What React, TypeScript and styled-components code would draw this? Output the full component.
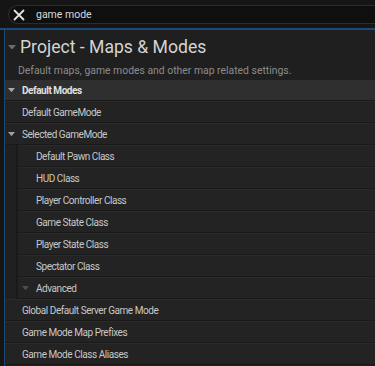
import React from 'react';
import styled, { createGlobalStyle } from 'styled-components';

const GlobalStyle = createGlobalStyle`
  html, body {
    margin: 0;
    padding: 0;
    background: #151515;
    font-family: Roboto, "Noto Sans", "Liberation Sans", sans-serif;
  }
`;

interface Row {
  label: string;
  level: number;
  expander?: boolean;
  dim?: boolean;
}

const rows: Row[] = [
  { label: 'Default GameMode', level: 1 },
  { label: 'Selected GameMode', level: 1, expander: true },
  { label: 'Default Pawn Class', level: 2 },
  { label: 'HUD Class', level: 2 },
  { label: 'Player Controller Class', level: 2 },
  { label: 'Game State Class', level: 2 },
  { label: 'Player State Class', level: 2 },
  { label: 'Spectator Class', level: 2 },
  { label: 'Advanced', level: 2, expander: true, dim: true },
  { label: 'Global Default Server Game Mode', level: 1 },
  { label: 'Game Mode Map Prefixes', level: 1 },
  { label: 'Game Mode Class Aliases', level: 1 },
];

function Arrow({ color, size }: { color: string; size: number }) {
  return (
    <svg width={size} height={size * 0.6} viewBox="0 0 10 6">
      <path d="M0 0 L10 0 L5 6 Z" fill={color} />
    </svg>
  );
}

function App() {
  return (
    <>
      <GlobalStyle />
      <Page>
        <SearchBar>
          <SearchBox>
            <svg width="12" height="12" viewBox="0 0 12 12">
              <path d="M1.5 1.5 L10.5 10.5 M10.5 1.5 L1.5 10.5" stroke="#e2e2e2" strokeWidth="1.8" strokeLinecap="round" />
            </svg>
            <SearchText>game mode</SearchText>
          </SearchBox>
        </SearchBar>
        <Panel>
          <TitleBlock>
            <TitleRow>
              <Arrow color="#6a6a6a" size={8} />
              <Title>Project - Maps &amp; Modes</Title>
            </TitleRow>
            <Subtitle>Default maps, game modes and other map related settings.</Subtitle>
          </TitleBlock>
          <CategoryRow>
            <Arrow color="#a8a8a8" size={7} />
            <CategoryLabel>Default Modes</CategoryLabel>
          </CategoryRow>
          {rows.map((row) => (
            <PropRow key={row.label}>
              {row.level === 2 && <Indent />}
              <PropCell $level={row.level}>
                {row.expander ? (
                  <Arrow color={row.dim ? '#4e4e4e' : '#a0a0a0'} size={7} />
                ) : (
                  <Spacer />
                )}
                <PropLabel>{row.label}</PropLabel>
              </PropCell>
            </PropRow>
          ))}
        </Panel>
      </Page>
    </>
  );
}

export default App;

const Page = styled.div`
  width: 375px;
  height: 366px;
  overflow: hidden;
  background: #151515;
  display: flex;
  flex-direction: column;
`;

const SearchBar = styled.div`
  height: 30px;
  flex-shrink: 0;
  padding: 5px 0 0 8px;
  box-sizing: border-box;
  border-bottom: 2px solid #1b4a78;
`;

const SearchBox = styled.div`
  height: 17px;
  border: 1px solid #2c2c2c;
  border-right: none;
  border-radius: 10px 0 0 10px;
  background: #0f0f0f;
  display: flex;
  align-items: center;
  padding-left: 4px;
  gap: 11px;
`;

const SearchText = styled.span`
  color: #d8d8d8;
  font-size: 10.5px;
`;

const Panel = styled.div`
  flex: 1;
  margin-left: 4px;
  border-left: 1px solid #1b4a78;
  background: #202020;
  display: flex;
  flex-direction: column;
`;

const TitleBlock = styled.div`
  height: 50px;
  flex-shrink: 0;
  padding: 6px 0 0 3px;
  box-sizing: border-box;
  background: #1f1f1f;
`;

const TitleRow = styled.div`
  display: flex;
  align-items: center;
  gap: 4px;
  height: 22px;
`;

const Title = styled.span`
  color: #d4d4d4;
  font-size: 17.6px;
`;

const Subtitle = styled.div`
  color: #8c8c8c;
  font-size: 10.4px;
  margin: 6px 0 0 10px;
`;

const CategoryRow = styled.div`
  height: 21px;
  flex-shrink: 0;
  box-sizing: border-box;
  background: #2f2f2f;
  display: flex;
  align-items: center;
  padding-left: 3px;
  gap: 7px;
  border-bottom: 1px solid #1a1a1a;
`;

const CategoryLabel = styled.span`
  color: #e0e0e0;
  font-size: 10px;
  font-weight: 700;
  letter-spacing: -0.45px;
`;

const PropRow = styled.div`
  height: 22px;
  flex-shrink: 0;
  display: flex;
  background: #232323;
`;

const Indent = styled.div`
  width: 11px;
  background: #202020;
  border-right: 2px solid #1a1a1a;
`;

const PropCell = styled.div<{ $level: number }>`
  flex: 1;
  display: flex;
  align-items: center;
  gap: 7px;
  padding-left: ${(p) => (p.$level === 2 ? '4px' : '3px')};
  border-top: 1px solid #2a2a2a;
  border-bottom: 1px solid #1a1a1a;
`;

const Spacer = styled.div`
  width: 7px;
`;

const PropLabel = styled.span`
  color: #c8c8c8;
  font-size: 10px;
  letter-spacing: -0.45px;
`;
